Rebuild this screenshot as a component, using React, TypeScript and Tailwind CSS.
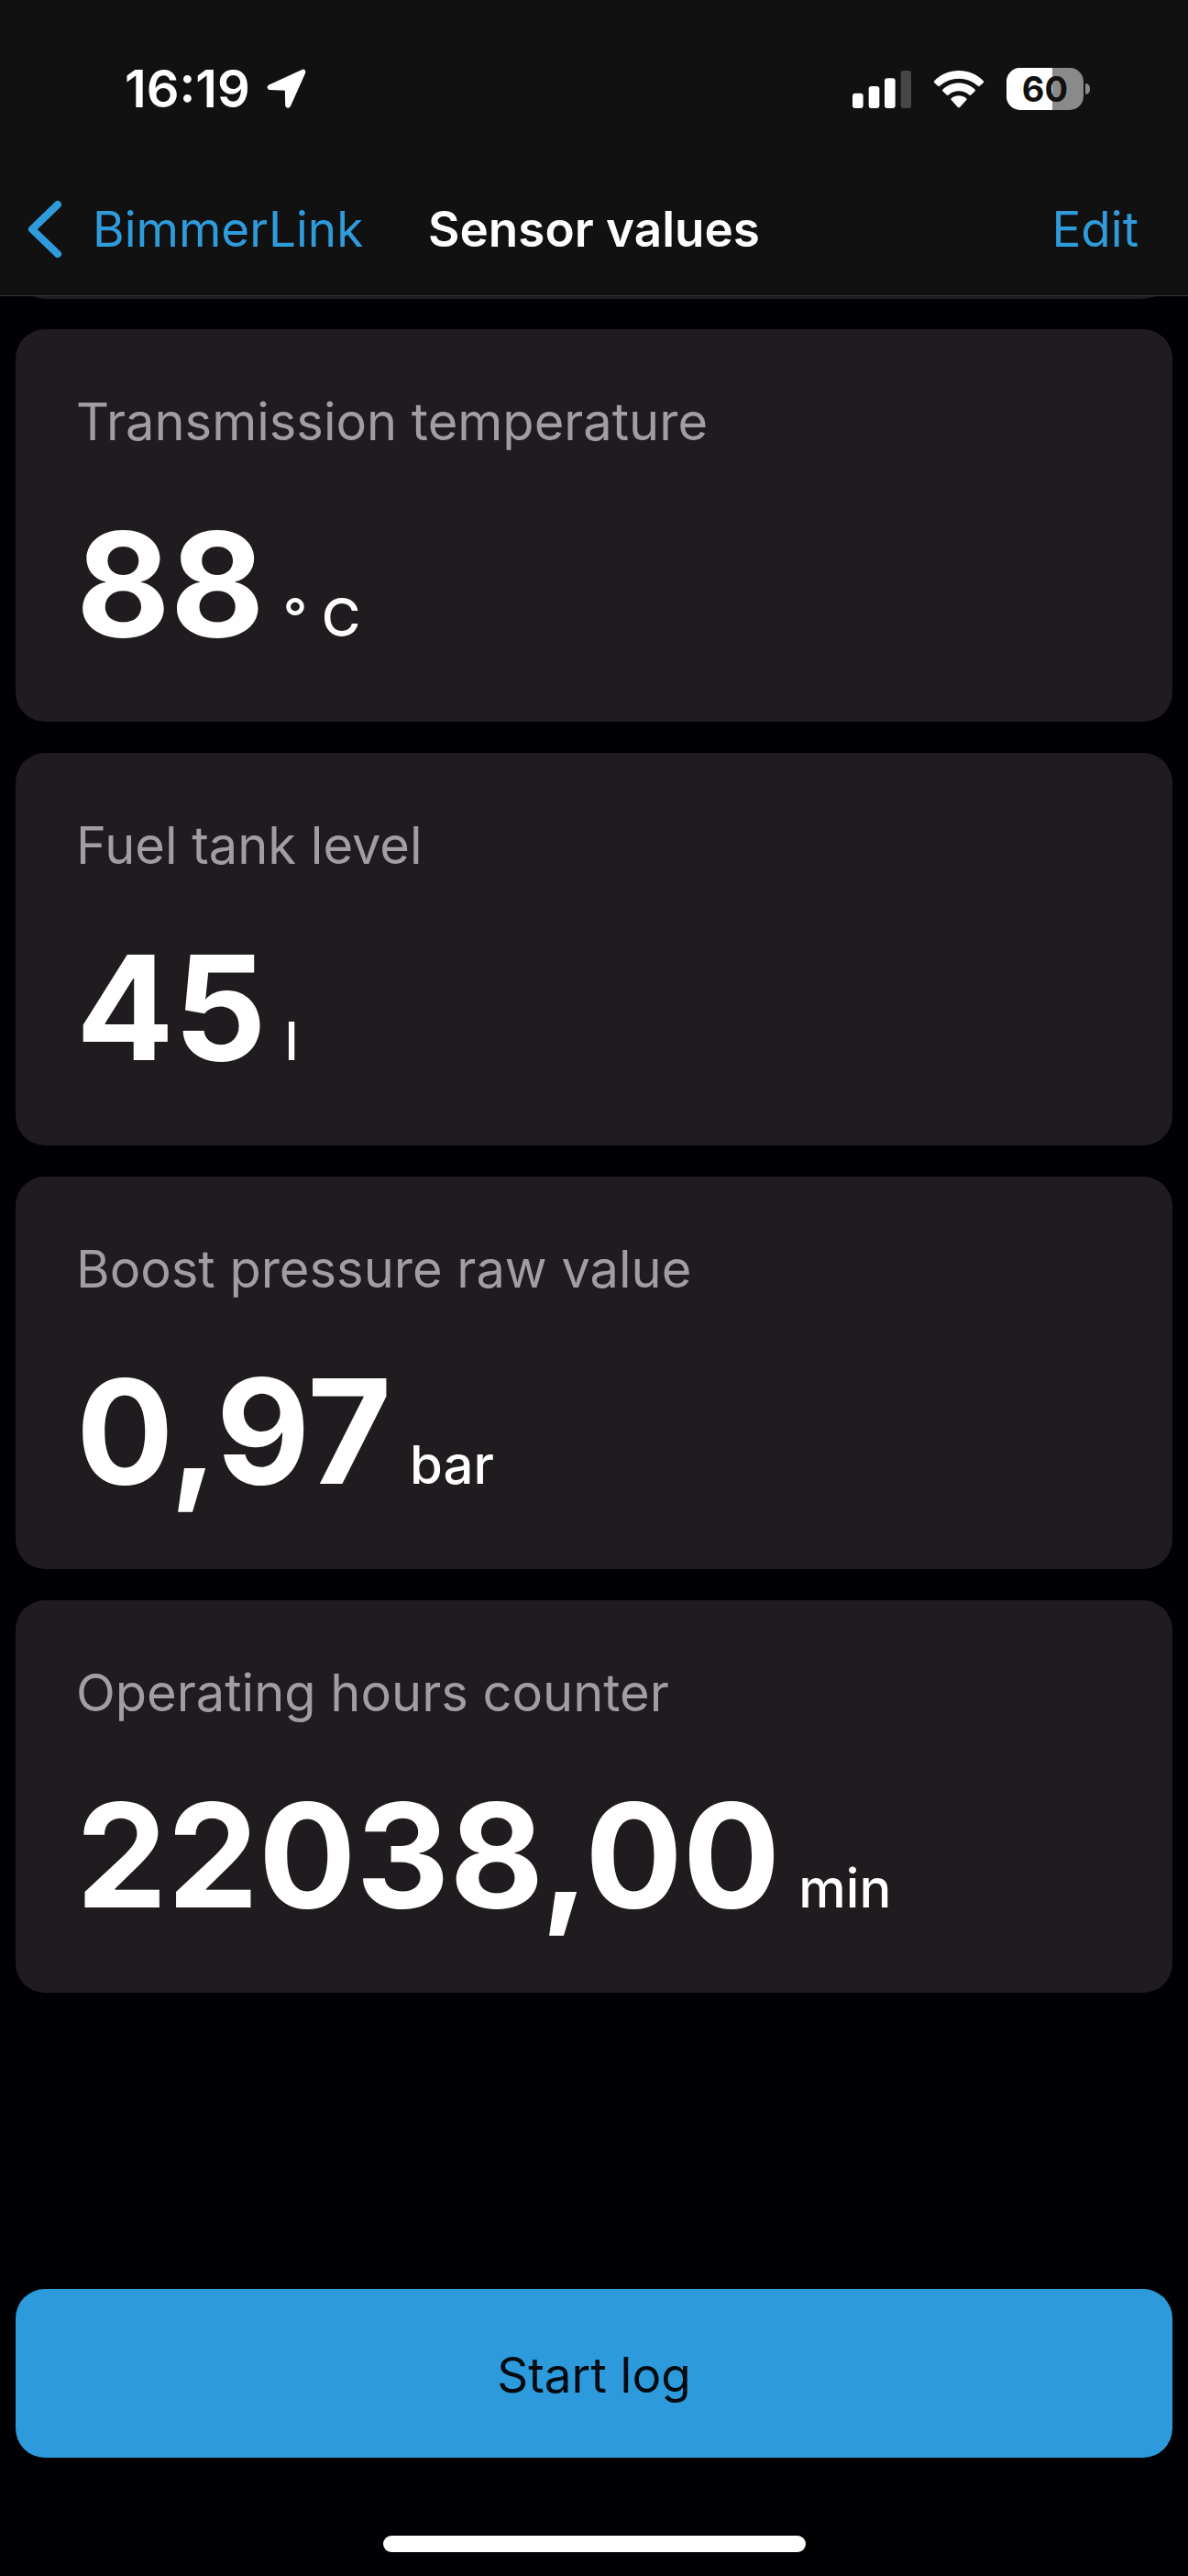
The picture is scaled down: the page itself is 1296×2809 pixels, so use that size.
type Sensor = {
  name: string;
  value: string;
  unit: string;
};

const sensors: Sensor[] = [
  { name: "Transmission temperature", value: "88", unit: "° C" },
  { name: "Fuel tank level", value: "45", unit: "l" },
  { name: "Boost pressure raw value", value: "0,97", unit: "bar" },
  { name: "Operating hours counter", value: "22038,00", unit: "min" },
];

const LocationIcon = () => (
  <svg viewBox="0 0 130 132" className="h-[44px] w-[43px]" aria-hidden="true">
    <path
      d="M8 58 L118 7 Q122 5 123 9 Q123 11 122 13 L74 121 Q70 127 66 121 L65 68 Q65 66 63 66 L9 64 Q5 61 8 58Z"
      fill="white"
      stroke="white"
      strokeWidth="10"
      strokeLinejoin="round"
    />
  </svg>
);

const SignalIcon = () => (
  <svg viewBox="0 0 192 123" className="h-[41px] w-[64px]" fill="white" aria-hidden="true">
    <rect x="0" y="74" width="35" height="49" rx="9" />
    <rect x="53" y="51" width="35" height="72" rx="9" />
    <rect x="105" y="25" width="35" height="98" rx="9" />
    <rect x="158" y="0" width="34" height="123" rx="9" fill="#464646" />
  </svg>
);

const WifiIcon = () => (
  <svg viewBox="0 0 168 124" className="h-[41px] w-[56px]" fill="white" aria-hidden="true">
    <path d="M3 34 C48 -11 120 -11 165 34 Q168 37 165 40 L153 51 Q150 54 147 51 C112 18 56 18 21 51 Q18 54 15 51 L3 40 Q0 37 3 34Z" />
    <path d="M31 62 C61 34 107 34 137 62 Q140 65 137 68 L124 80 Q121 83 118 80 C98 63 70 63 50 80 Q47 83 44 80 L31 68 Q28 65 31 62Z" />
    <path d="M60 91 C74 80 94 80 108 91 Q112 94 109 97 L88 120 Q84 124 80 120 L59 97 Q56 94 60 91Z" />
  </svg>
);

const Battery = ({ level }: { level: number }) => (
  <div className="flex items-center gap-[2px]">
    <div className="relative flex h-[46px] w-[84px] items-center justify-center overflow-hidden rounded-[15px] bg-[#8a8a8a]">
      <div
        className="absolute inset-y-0 left-0 bg-white"
        style={{ width: `${level}%` }}
      />
      <span className="relative text-[38px] leading-[46px] font-bold text-[#111111]">
        {level}
      </span>
    </div>
    <div className="h-[12px] w-[5px] rounded-r-full bg-[#8a8a8a]" />
  </div>
);

const StatusBar = () => (
  <div className="flex h-[194px] items-center justify-between pr-[107px] pl-[136px]">
    <div className="flex items-center gap-[18px]">
      <span className="text-[56px] leading-[64px] font-semibold">16:19</span>
      <LocationIcon />
    </div>
    <div className="flex items-center gap-6">
      <SignalIcon />
      <WifiIcon />
      <Battery level={60} />
    </div>
  </div>
);

const NavBar = () => (
  <nav className="mb-4 grid h-[112px] grid-cols-[1fr_auto_1fr] items-center px-[30px] text-[53px] leading-[64px]">
    <a href="#back" className="flex items-center gap-[33px] text-[#2f9bdb]">
      <svg viewBox="0 0 38 64" className="h-[64px] w-[38px]" aria-hidden="true">
        <path
          d="M33 5 L5 32 L33 59"
          fill="none"
          stroke="currentColor"
          strokeWidth="8"
          strokeLinecap="round"
          strokeLinejoin="round"
        />
      </svg>
      BimmerLink
    </a>
    <h1 className="font-semibold">Sensor values</h1>
    <button type="button" className="mr-6 justify-self-end text-[#2f9bdb]">
      Edit
    </button>
  </nav>
);

const SensorCard = ({ name, value, unit }: Sensor) => (
  <section className="rounded-[32px] bg-[#1f1b1f] px-[66px] pt-[67px] pb-[56px]">
    <h2 className="text-[56px] leading-[68px] text-[#a09ea2]">{name}</h2>
    <p className="mt-[49px] flex items-baseline gap-5 text-[158px] leading-[188px] font-bold">
      {value}
      <span className="text-[58px] leading-[68px] font-medium">{unit}</span>
    </p>
  </section>
);

export default function App() {
  return (
    <div className="flex min-h-screen flex-col bg-[#010003] font-['Inter',sans-serif] text-white">
      <header className="border-b border-[#37353a] bg-[#111111]">
        <StatusBar />
        <NavBar />
      </header>

      <main className="px-[17px]">
        {/* bottom edge of the card scrolled under the header */}
        <div className="flex h-[3px] items-end overflow-hidden">
          <div className="h-[64px] w-full shrink-0 rounded-[32px] bg-[#1f1b1f]" />
        </div>
        <div className="mt-[33px] flex flex-col gap-[34px]">
          {sensors.map((sensor) => (
            <SensorCard key={sensor.name} {...sensor} />
          ))}
        </div>
      </main>

      <footer className="mt-auto flex flex-col items-center px-[17px] pt-8 pb-[26px]">
        <button
          type="button"
          className="h-[184px] w-full rounded-[32px] bg-[#2d9bdb] pt-1 text-[53px] leading-[64px] text-[#020a10]"
        >
          Start log
        </button>
        <div className="mt-[85px] h-[18px] w-[461px] rounded-full bg-white" />
      </footer>
    </div>
  );
}
